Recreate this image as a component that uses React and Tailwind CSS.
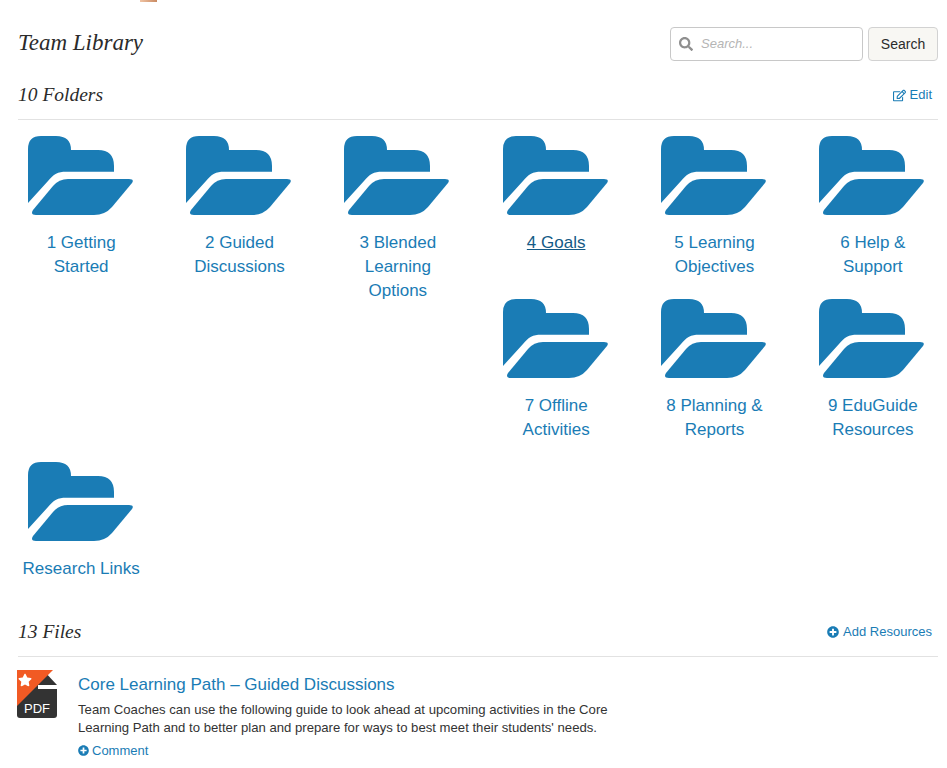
import React from 'react';
import { FaSearch, FaRegEdit, FaPlusCircle, FaStar } from 'react-icons/fa';

const folders = [
  '1 Getting Started',
  '2 Guided Discussions',
  '3 Blended Learning Options',
  '4 Goals',
  '5 Learning Objectives',
  '6 Help & Support',
  '7 Offline Activities',
  '8 Planning & Reports',
  '9 EduGuide Resources',
  'Research Links',
];

const FolderIcon = () => (
  <svg viewBox="0 0 106 80" className="block w-[106px] h-[80px] ml-[25.6px]" fill="#1a7cb5">
    <path d="M0 67 V13 Q0 0 13 0 H28 Q43 0 43 14 H70 Q86 14 86 30 V35.7 H38 C30 35.7 25.5 38 20 45 Z" />
    <path d="M40 43 H101 Q106.5 43 104 47 L84 71 Q77 79 66 79 H8 Q2 79 5 74 L25 50 Q31 43 40 43 Z" />
  </svg>
);

const PdfIcon = () => (
  <svg viewBox="0 0 40 48" className="block w-[40px] h-[48px]">
    <path d="M2 0 H26 L40 15 V45 Q40 48 37 48 H3 Q0 48 0 45 V2 Q0 0 2 0 Z" fill="#333333" />
    <path d="M21 15 H40 V19 H21 Z" fill="#ffffff" />
    <path d="M0 0 H36 L0 36 Z" fill="#f15a24" />
  </svg>
);

const SectionHeader = ({ title, icon, action }) => (
  <div className="flex items-center justify-between border-b border-[#e2e2e2] h-[45px] pb-[4px]">
    <h2 className="font-['Liberation_Serif',serif] italic text-[19.5px] text-[#2b2b2b]">{title}</h2>
    <a className="flex items-center gap-1 pr-[6px] text-[13px] text-[#1a7cb5]">
      {icon}
      {action}
    </a>
  </div>
);

export default function App() {
  return (
    <div className="h-[768px] overflow-hidden bg-white font-['Liberation_Sans',sans-serif]">
      <div className="ml-[140px] w-[17px] h-[2px] bg-gradient-to-r from-[#f0c4a4] to-[#c98a62]"></div>

      <div className="px-[18px] w-[956px]">
        <div className="flex items-start justify-between w-[920px] pt-[25px]">
          <h1 className="font-['Liberation_Serif',serif] italic text-[23px] leading-[32px] text-[#2b2b2b]">Team Library</h1>
          <div className="flex gap-[5px]">
            <div className="flex items-center w-[193px] h-[34px] pl-[8px] gap-[8px] border border-[#c8c8c8] rounded">
              <FaSearch size={14} className="text-[#8f8f8f]" />
              <span className="italic text-[13px] text-[#b5b5b5]">Search...</span>
            </div>
            <button className="w-[70px] h-[34px] border border-[#d2d2d2] rounded bg-[#f8f7f3] text-[14px] text-[#2b2b2b]">Search</button>
          </div>
        </div>

        <div className="w-[920px] mt-[14px]">
          <SectionHeader title="10 Folders" icon={<FaRegEdit size={13} />} action="Edit" />
        </div>

        <div className="-ml-[16px] w-[950px] pt-[16px]">
          {folders.map((name, i) => (
            <div key={name} className="float-left w-[158.33px] pb-[20px] text-center">
              <FolderIcon />
              <a className={`block mt-[15px] px-[20px] text-[17px] leading-[24px] ${i === 3 ? 'text-[#145a86] underline' : 'text-[#1a7cb5]'}`}>
                {name}
              </a>
            </div>
          ))}
        </div>

        <div className="w-[920px] clear-both pt-[11px]">
          <SectionHeader title="13 Files" icon={<FaPlusCircle size={12} />} action="Add Resources" />
        </div>

        <div className="flex w-[920px] gap-[21px] pt-[13px] -ml-[1px]">
          <div className="relative shrink-0 w-[40px] h-[48px]">
            <PdfIcon />
            <FaStar size={14} className="absolute left-[1px] top-[3px] text-white" />
            <span className="absolute left-0 right-0 bottom-0 text-center text-[13px] text-white">PDF</span>
          </div>
          <div className="w-[540px]">
            <a className="block text-[17px] leading-[24px] mt-[3px] text-[#1a7cb5]">Core Learning Path – Guided Discussions</a>
            <p className="mt-[4px] text-[13.15px] leading-[18px] text-[#333333]">
              Team Coaches can use the following guide to look ahead at upcoming activities in the Core Learning Path and to better plan and prepare for ways to best meet their students' needs.
            </p>
            <a className="flex items-center gap-[3px] mt-[4px] text-[13px] text-[#1a7cb5]">
              <FaPlusCircle size={11} />
              Comment
            </a>
          </div>
        </div>
      </div>
    </div>
  );
}
